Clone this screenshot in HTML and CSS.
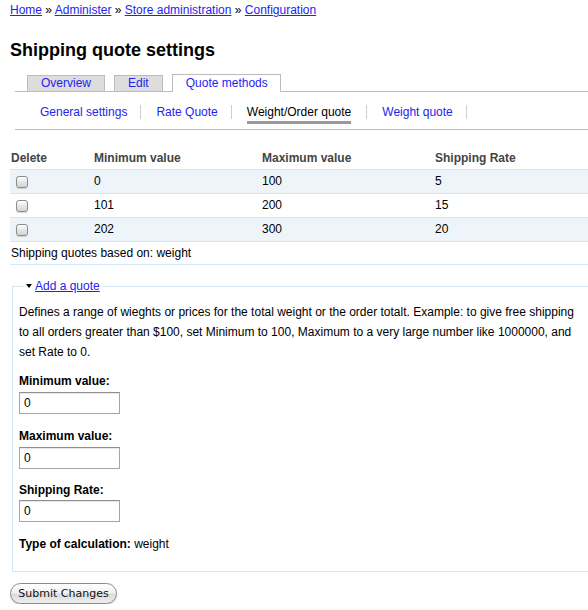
FILE: index.html
```html
<!DOCTYPE html>
<html>
<head>
<meta charset="utf-8">
<title>Shipping quote settings</title>
<link rel="stylesheet" href="styles.css">
</head>
<body>
<div class="page">
  <div class="breadcrumb"><a href="#">Home</a> » <a href="#">Administer</a> » <a href="#">Store administration</a> » <a href="#">Configuration</a></div>
  <h1 class="title">Shipping quote settings</h1>
  <ul class="tabs primary">
    <li><a href="#">Overview</a></li>
    <li><a href="#">Edit</a></li>
    <li class="active"><a href="#">Quote methods</a></li>
  </ul>
  <ul class="tabs secondary">
    <li><a href="#">General settings</a></li>
    <li><a href="#">Rate Quote</a></li>
    <li class="active"><a href="#">Weight/Order quote</a></li>
    <li><a href="#">Weight quote</a></li>
  </ul>
  <form class="quote-form">
    <table class="quotes">
      <thead>
        <tr><th class="c-del">Delete</th><th class="c-min">Minimum value</th><th class="c-max">Maximum value</th><th>Shipping Rate</th></tr>
      </thead>
      <tbody>
        <tr class="odd"><td><input type="checkbox" class="check"></td><td>0</td><td>100</td><td>5</td></tr>
        <tr class="even"><td><input type="checkbox" class="check"></td><td>101</td><td>200</td><td>15</td></tr>
        <tr class="odd"><td><input type="checkbox" class="check"></td><td>202</td><td>300</td><td>20</td></tr>
      </tbody>
    </table>
    <div class="based-on">Shipping quotes based on: weight</div>
    <fieldset class="add-quote">
      <legend><span class="arrow"></span><a href="#">Add a quote</a></legend>
      <p class="description">Defines a range of wieghts or prices for the total weight or the order totalt. Example: to give free shipping to all orders greater than $100, set Minimum to 100, Maximum to a very large number like 1000000, and set Rate to 0.</p>
      <div class="form-item">
        <label class="label">Minimum value:</label>
        <input type="text" class="text-input" value="0">
      </div>
      <div class="form-item">
        <label class="label">Maximum value:</label>
        <input type="text" class="text-input" value="0">
      </div>
      <div class="form-item">
        <label class="label">Shipping Rate:</label>
        <input type="text" class="text-input" value="0">
      </div>
      <div class="calc"><strong>Type of calculation:</strong> weight</div>
    </fieldset>
    <button type="button" class="submit">Submit Changes</button>
  </form>
</div>
</body>
</html>
```
FILE: styles.css
```css
html, body {
  margin: 0;
  padding: 0;
  overflow: hidden;
  background: #fff;
}
body {
  font-family: "Liberation Sans", Arial, Helvetica, sans-serif;
  font-size: 12px;
  color: #000;
}
a {
  color: #2323f0;
}
.page {
  width: 588px;
  padding: 0 10px;
}
.breadcrumb {
  line-height: 20px;
}
.title {
  font-size: 18px;
  line-height: 22px;
  margin: 19px 0 13px;
  font-weight: bold;
}
.tabs {
  list-style: none;
  margin: 0;
  padding: 0;
}
.tabs a {
  text-decoration: none;
}
.primary {
  margin-left: 5px;
  padding-left: 12px;
  border-bottom: 1px solid #bbb;
  display: flex;
  gap: 9px;
  align-items: flex-end;
}
.primary li a {
  display: block;
  border: 1px solid #bbb;
  border-bottom: none;
  background: #ddd;
  padding: 0 13px;
  line-height: 15px;
  margin-bottom: 0;
}
.primary li.active a {
  background: #fff;
  line-height: 16px;
  margin-bottom: -1px;
  padding: 0 12px 1px 13px;
}
.secondary {
  margin-left: 5px;
  padding: 13px 0 10px 10px;
  border-bottom: 1px solid #bbb;
  display: flex;
}
.secondary li {
  border-right: 1px solid #ccc;
  padding: 0 13px 0 15px;
  line-height: 14px;
}
.secondary li.active {
  padding-right: 15px;
}
.secondary li.active a {
  color: #000;
  padding-bottom: 2px;
  border-bottom: 3px solid #999;
}
.quotes {
  width: 100%;
  border-collapse: collapse;
  margin-top: 18px;
}
.quotes th {
  text-align: left;
  color: #444;
  font-weight: bold;
  line-height: 15px;
  padding: 3px 1px;
  border-bottom: 1px solid #d3e7f4;
}
.c-del { width: 81px; }
.c-min { width: 166px; }
.c-max { width: 171px; }
.quotes td {
  line-height: 15px;
  padding: 4px 1px;
  border-bottom: 1px solid #d3e7f4;
}
.quotes tr.odd td {
  background: #edf5fa;
}
.check {
  -webkit-appearance: none;
  appearance: none;
  width: 12px;
  height: 12px;
  margin: 0 0 0 5px;
  border: 1px solid #8c8c8c;
  border-radius: 3px;
  background: linear-gradient(#ffffff, #e6e6e6 50%, #d4d4d4);
  vertical-align: middle;
  box-shadow: 0 1px 1px rgba(0,0,0,0.15);
}
.based-on {
  padding: 4px 1px 3px;
  line-height: 15px;
  border-bottom: 1px solid #d3e7f4;
}
.add-quote {
  margin: 14px 0 11px 2px;
  border: 1px solid #d3e7f4;
  padding: 0 6px 17px;
}
.add-quote legend {
  margin-left: 5px;
  padding: 0 2px;
  line-height: 14px;
}
.arrow {
  display: inline-block;
  width: 0;
  height: 0;
  border-left: 3.5px solid transparent;
  border-right: 3.5px solid transparent;
  border-top: 4px solid #000;
  vertical-align: middle;
  margin-right: 3px;
  position: relative;
  top: -1px;
}
.description {
  max-width: 558px;
  margin: 9px 0 9px;
  line-height: 20px;
}
.form-item {
  margin-bottom: 12px;
}
.form-item + .form-item + .form-item .label {
  line-height: 18px;
}
.label {
  display: block;
  font-weight: bold;
  line-height: 20px;
  margin-bottom: 1px;
}
.text-input {
  display: block;
  box-sizing: border-box;
  width: 101px;
  height: 22px;
  margin: 0;
  padding: 2px 4px;
  border: 1px solid #a5a5a5;
  border-top-color: #8f8f8f;
  box-shadow: inset 0 1px 1px rgba(0,0,0,0.1);
  font-family: "Liberation Sans", Arial, sans-serif;
  font-size: 12px;
  color: #000;
}
.calc {
  line-height: 20px;
}
.submit {
  display: block;
  box-sizing: border-box;
  width: 107px;
  height: 21px;
  padding: 0;
  border: 1px solid #8a8a8a;
  border-radius: 11px;
  background: linear-gradient(#ffffff, #f2f2f2 45%, #dcdcdc 55%, #eeeeee);
  font-family: "DejaVu Sans", "Lucida Grande", sans-serif;
  font-size: 11px;
  color: #111;
  box-shadow: 0 1px 1px rgba(0,0,0,0.2);
}
```
